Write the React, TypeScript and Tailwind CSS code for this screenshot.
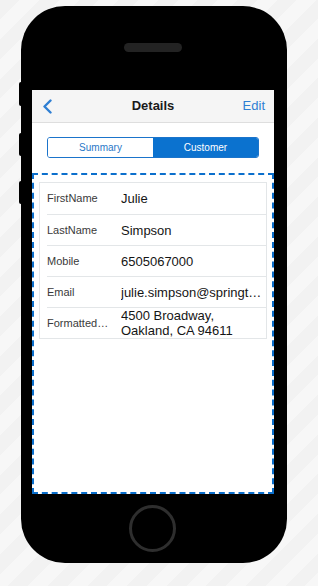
const ROWS = [
  { label: "FirstName", value: ["Julie"] },
  { label: "LastName", value: ["Simpson"] },
  { label: "Mobile", value: ["6505067000"] },
  { label: "Email", value: ["julie.simpson@springtelco.com"] },
  { label: "FormattedAddress", value: ["4500 Broadway,", "Oakland, CA 94611"] },
];

function Header() {
  return (
    <div className="relative flex h-[33px] items-center justify-between border-b border-[#dedede] bg-[#f5f5f5] px-[9px]">
      <svg width="10" height="15" viewBox="0 0 10 15" className="ml-[1px]">
        <path d="M8.5 1.5 L2.5 7.5 L8.5 13.5" fill="none" stroke="#2f7fd3" strokeWidth="2.4" strokeLinecap="round" strokeLinejoin="round" />
      </svg>
      <span className="absolute left-1/2 -translate-x-1/2 text-[13px] font-bold text-[#1a1a1a]">Details</span>
      <span className="text-[13px] text-[#2f7fd3]">Edit</span>
    </div>
  );
}

function Tabs() {
  return (
    <div className="mx-[15px] mt-[14px] flex h-[21px] overflow-hidden rounded-[3px] border border-[#1b74cb] text-[10px]">
      <div className="flex flex-1 items-center justify-center bg-white text-[#2a78c8]">Summary</div>
      <div className="flex flex-1 items-center justify-center bg-[#0b72cf] text-white">Customer</div>
    </div>
  );
}

function DetailList() {
  return (
    <div className="mx-[5px] mt-[7px] border border-[#e3e6e8] bg-white">
      {ROWS.map((row, i) => (
        <div key={row.label} className={`ml-[7px] flex h-[31px] items-center ${i > 0 ? "border-t border-[#e3e6e8]" : ""}`}>
          <div className="w-[64px] truncate text-[11px] text-[#3a3a3a]">{row.label}</div>
          <div className="ml-[10px] min-w-0 flex-1 pr-[3px] text-[13px] leading-[15px] text-[#151515]">
            {row.value.map((line) => (
              <div key={line} className="truncate">{line}</div>
            ))}
          </div>
        </div>
      ))}
    </div>
  );
}

export default function App() {
  return (
    <div
      className="h-[586px] w-[318px] overflow-hidden bg-[repeating-linear-gradient(135deg,#f2f2f2_0px,#f2f2f2_14px,#f7f7f7_14px,#f7f7f7_28px)] pt-[6px]"
      style={{ fontFamily: '"Liberation Sans", Arial, sans-serif' }}
    >
      <div className="relative ml-[21px] h-[557px] w-[266px] rounded-[44px] bg-black">
        {/* side buttons */}
        <div className="absolute left-[-2px] top-[76px] h-[24px] w-[3px] rounded-l-[2px] bg-black" />
        <div className="absolute left-[-2px] top-[127px] h-[23px] w-[3px] rounded-l-[2px] bg-black" />
        <div className="absolute left-[-2px] top-[175px] h-[23px] w-[3px] rounded-l-[2px] bg-black" />

        <div className="ml-[103px] h-[9px] w-[58px] translate-y-[37px] rounded-full bg-[#232323]" />

        <div className="ml-[11px] mt-[75px] flex h-[404px] w-[242px] flex-col bg-white">
          <Header />
          <Tabs />
          <div className="mt-[15px] flex-1 border-2 border-dashed border-[#0b6fcc]">
            <DetailList />
          </div>
        </div>

        <div className="ml-[108px] mt-[11px] h-[47px] w-[47px] rounded-full border-[3px] border-[#2e2e2e]" />
      </div>
    </div>
  );
}
